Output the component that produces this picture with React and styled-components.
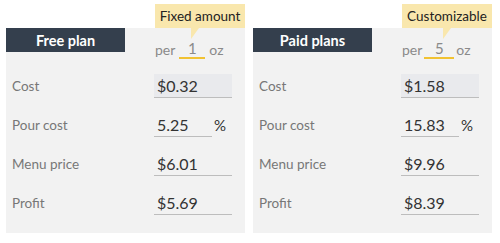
import styled, { createGlobalStyle } from 'styled-components';

const Global = createGlobalStyle`
    body {
        margin: 0;
        background: #ffffff;
        font-family: Lato, "Noto Sans", sans-serif;
    }
`

const Page = styled.div`
    display: flex;
    gap: 8px;
    padding: 28px 8px 0 6px;
`

const Panel = styled.div`
    position: relative;
    width: 239px;
    height: 205px;
    background: #f2f2f2;
`

const Tip = styled.div`
    position: absolute;
    right: 0;
    bottom: 100%;
    width: 90px;
    height: 24px;
    background: #f9e7ad;
    color: #222;
    font-size: 13.5px;
    display: flex;
    align-items: center;
    justify-content: center;

    &::after {
        content: "";
        position: absolute;
        top: 100%;
        left: ${p => p.$tail}px;
        border-right: 8px solid transparent;
        border-top: 11px solid #f9e7ad;
    }
`

const Top = styled.div`
    display: flex;
    align-items: flex-start;
`

const Header = styled.div`
    width: 119px;
    height: 24px;
    background: #343f4d;
    color: #fff;
    font-weight: 700;
    font-size: 14.5px;
    display: flex;
    align-items: center;
    justify-content: center;
`

const Per = styled.div`
    display: flex;
    align-items: center;
    margin: 12px 0 0 30px;
    color: #8a8a8a;
    font-size: 14px;
    height: 18px;
`

const Qty = styled.span`
    display: inline-block;
    width: ${p => p.$w}px;
    margin: 0 ${p => p.$gap}px;
    text-align: center;
    font-size: 15px;
    border-bottom: 2px solid #f1c232;
    line-height: 17px;
`

const Rows = styled.div`
    display: flex;
    flex-direction: column;
    gap: 15px;
    margin-top: 16px;
`

const Row = styled.div`
    display: flex;
    align-items: center;
    height: 24px;
`

const Label = styled.div`
    width: 142px;
    padding-left: 6px;
    color: #777;
    font-size: 13.5px;
`

const Field = styled.div`
    box-sizing: border-box;
    width: ${p => p.$w || 78}px;
    height: 24px;
    padding-left: 3px;
    display: flex;
    align-items: center;
    background: ${p => (p.$filled ? '#e9eaed' : 'transparent')};
    border-bottom: 1px solid #bdbdbd;
    color: #333;
    font-size: 16px;
`

const Unit = styled.span`
    margin-left: 2px;
    color: #333;
    font-size: 15px;
`

const Card = ({ title, tip, tail, qty, qtyW, gap, cost, pour, price, profit }) => (
    <Panel>
        <Tip $tail={tail}>{tip}</Tip>
        <Top>
            <Header>{title}</Header>
            <Per>
                per
                <Qty $w={qtyW} $gap={gap}>{qty}</Qty>
                oz
            </Per>
        </Top>
        <Rows>
            <Row>
                <Label>Cost</Label>
                <Field $filled>{cost}</Field>
            </Row>
            <Row>
                <Label>Pour cost</Label>
                <Field $w={58}>{pour}</Field>
                <Unit>%</Unit>
            </Row>
            <Row>
                <Label>Menu price</Label>
                <Field>{price}</Field>
            </Row>
            <Row>
                <Label>Profit</Label>
                <Field>{profit}</Field>
            </Row>
        </Rows>
    </Panel>
)

export default function App() {
    return (
        <Page>
            <Global />
            <Card title="Free plan" tip="Fixed amount" tail={36} qty="1" qtyW={26} gap={4}
                cost="$0.32" pour="5.25" price="$6.01" profit="$5.69" />
            <Card title="Paid plans" tip="Customizable" tail={41} qty="5" qtyW={30} gap={2}
                cost="$1.58" pour="15.83" price="$9.96" profit="$8.39" />
        </Page>
    )
}
